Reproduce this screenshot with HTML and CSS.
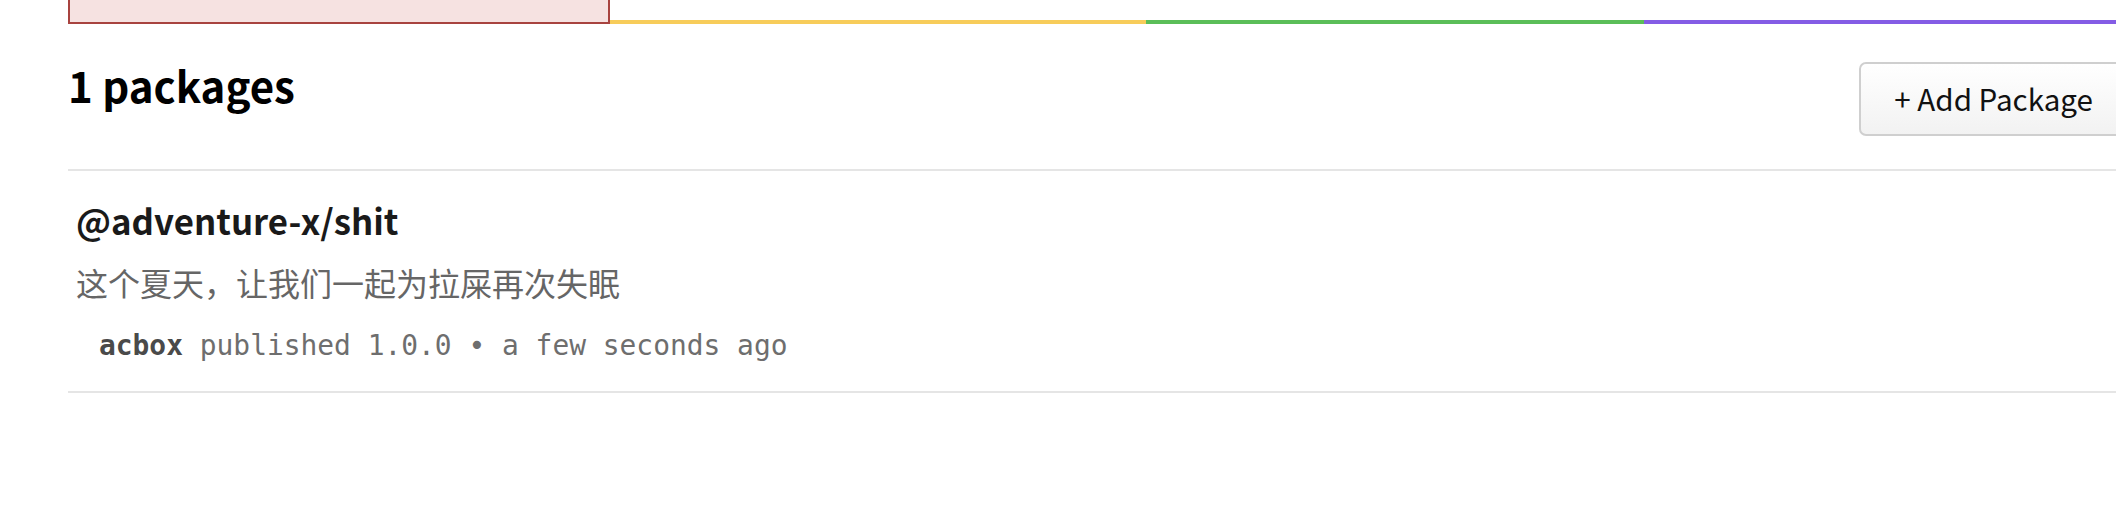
FILE: index.html
```html
<!DOCTYPE html>
<html lang="zh-CN">
<head>
<meta charset="utf-8">
<title>packages</title>
<link rel="stylesheet" href="styles.css">
</head>
<body>
<div class="page">
  <div class="tabs">
    <div class="tab tab-red"></div>
    <div class="tab tab-yellow"></div>
    <div class="tab tab-green"></div>
    <div class="tab tab-purple"></div>
  </div>
  <div class="header">
    <h2 class="count">1 packages</h2>
    <button class="add-btn" type="button">+ Add Package</button>
  </div>
  <ul class="list">
    <li class="item">
      <h3 class="name">@adventure-x/shit</h3>
      <p class="desc">这个夏天，让我们一起为拉屎再次失眠</p>
      <div class="meta"><span class="author">acbox</span> published 1.0.0 • a few seconds ago</div>
    </li>
  </ul>
</div>
</body>
</html>
```
FILE: styles.css
```css
html, body {
  margin: 0;
  padding: 0;
  overflow: hidden;
  background: #fff;
}
body {
  font-family: "Noto Sans CJK SC", "Noto Sans", sans-serif;
  color: #000;
}
.page {
  margin-left: 68px;
  width: 2060px;
}
.tabs {
  display: flex;
  height: 24px;
}
.tab {
  box-sizing: border-box;
  height: 24px;
  border-bottom: 4px solid transparent;
}
.tab-red {
  width: 542px;
  background: #f6e2e1;
  border: 2px solid #a8433f;
  border-top: 0;
}
.tab-yellow { width: 536px; border-bottom-color: #f7cc5a; }
.tab-green { width: 498px; border-bottom-color: #5bbe58; }
.tab-purple { flex: 1; border-bottom-color: #845ce5; }

.header {
  display: flex;
  justify-content: space-between;
  align-items: flex-start;
  padding-top: 38px;
  padding-bottom: 33px;
  border-bottom: 2px solid #e5e5e5;
}
.count {
  margin: 1px 0 0;
  font-size: 42px;
  line-height: 44px;
  font-weight: 700;
}
.add-btn {
  box-sizing: border-box;
  height: 74px;
  padding: 0 33px;
  border: 2px solid #cfcfcf;
  border-radius: 7px;
  background: linear-gradient(#ffffff, #f2f2f2);
  font-family: "Noto Sans CJK SC", "Noto Sans", sans-serif;
  font-size: 29.6px;
  line-height: 1;
  color: #111;
}
.list {
  list-style: none;
  margin: 0;
  padding: 0;
}
.item {
  padding: 31px 8px 31px;
  border-bottom: 2px solid #e5e5e5;
}
.name {
  margin: 0;
  font-size: 34.8px;
  line-height: 37px;
  font-weight: 600;
  color: #1a1a1a;
}
.desc {
  margin: 27px 0 0;
  font-size: 32px;
  line-height: 32px;
  color: #666;
}
.meta {
  margin: 34px 0 0 23px;
  font-family: "DejaVu Sans Mono", "Liberation Mono", monospace;
  font-size: 27.9px;
  line-height: 28px;
  color: #6e6e6e;
}
.author {
  font-weight: 700;
  color: #4a4a4a;
}
```
